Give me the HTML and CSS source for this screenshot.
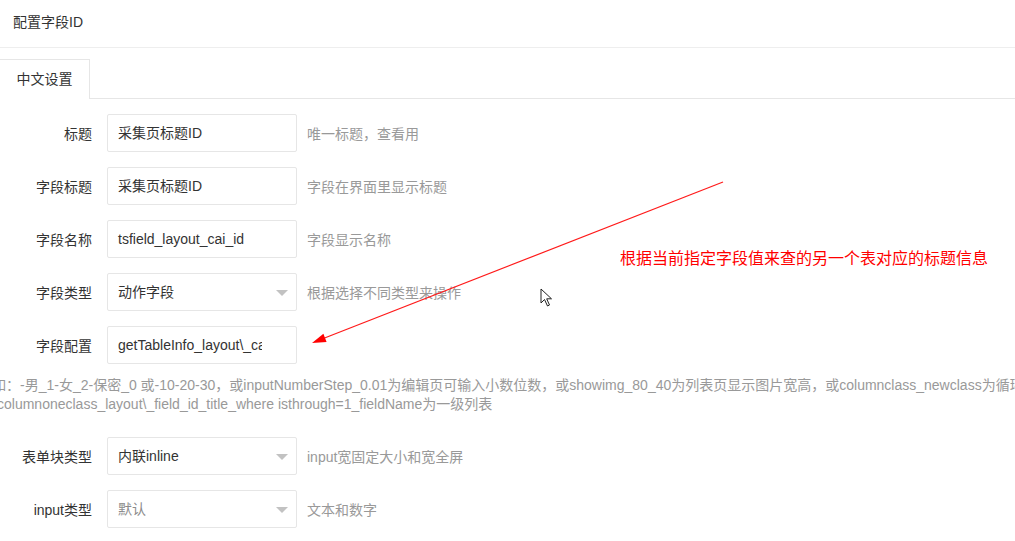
FILE: index.html
```html
<!DOCTYPE html>
<html>
  <head>
    <meta charset="utf-8" />
    <title>配置字段ID</title>
    <link rel="stylesheet" href="styles.css">
  </head>
  <body>
    <div class="page">
      <div class="page-header">配置字段ID</div>

      <div class="tab-bar">
        <div class="tab tab-active">中文设置</div>
      </div>

      <form class="form">
        <div class="form-row">
          <label class="form-label">标题</label>
          <div class="field">采集页标题ID</div>
          <div class="help">唯一标题，查看用</div>
        </div>
        <div class="form-row">
          <label class="form-label">字段标题</label>
          <div class="field">采集页标题ID</div>
          <div class="help">字段在界面里显示标题</div>
        </div>
        <div class="form-row">
          <label class="form-label">字段名称</label>
          <div class="field">tsfield_layout_cai_id</div>
          <div class="help">字段显示名称</div>
        </div>
        <div class="form-row">
          <label class="form-label">字段类型</label>
          <div class="field field-select">动作字段<i class="caret"></i></div>
          <div class="help">根据选择不同类型来操作</div>
        </div>
        <div class="form-row">
          <label class="form-label">字段配置</label>
          <div class="field"><span class="field-clip">getTableInfo_layout\_cai_id</span></div>
        </div>

        <div class="long-help">
          <span>例如：-男_1-女_2-保密_0 或-10-20-30，或inputNumberStep_0.01为编辑页可输入小数位数，或showimg_80_40为列表页显示图片宽高，或columnclass_newclass为循环</span>
          <span>columnoneclass_layout\_field_id_title_where isthrough=1_fieldName为一级列表</span>
        </div>

        <div class="form-row">
          <label class="form-label">表单块类型</label>
          <div class="field field-select">内联inline<i class="caret"></i></div>
          <div class="help">input宽固定大小和宽全屏</div>
        </div>
        <div class="form-row">
          <label class="form-label">input类型</label>
          <div class="field field-select field-muted">默认<i class="caret"></i></div>
          <div class="help">文本和数字</div>
        </div>
      </form>
    </div>

    <!-- annotation drawn over the screenshot -->
    <svg class="note-arrow" width="1015" height="541" viewBox="0 0 1015 541">
      <line x1="723" y1="182" x2="322" y2="339" stroke="#ff1a1a" stroke-width="1.2" />
      <polygon points="312,343 326.6,342.1 323.4,333.7" fill="#ff0000" />
    </svg>
    <div class="note-text">根据当前指定字段值来查的另一个表对应的标题信息</div>

    <svg class="cursor" width="14" height="20" viewBox="0 0 14 20">
      <path d="M1 1 L1 15 L4.5 11.5 L7.5 18 L9.5 17 L6.7 10.8 L11.5 10.8 Z" fill="#fff" stroke="#222" stroke-width="1" stroke-linejoin="round" />
    </svg>
  </body>
</html>
```

FILE: styles.css
```css
html,
body {
  margin: 0;
  padding: 0;
  width: 100%;
  height: 100%;
  overflow: hidden;
  background: #fff;
}

body {
  font-family: "Liberation Sans", "Noto Sans CJK SC", sans-serif;
  font-size: 14px;
  color: #333;
}

/* Header */

.page-header {
  height: 47px;
  line-height: 45px;
  padding-left: 13px;
  border-bottom: 1px solid #eeeeee;
}

/* Tabs */

.tab-bar {
  display: flex;
  margin-top: 11px;
  border-bottom: 1px solid #e6e6e6;
}

.tab {
  width: 90px;
  height: 39px;
  line-height: 39px;
  text-align: center;
  box-sizing: border-box;
}

.tab-active {
  border: 1px solid #e6e6e6;
  border-left: none;
  border-bottom: none;
  margin-bottom: -1px;
  height: 40px;
  background: #fff;
}

/* Form */

.form {
  padding-top: 15px;
}

.form-row {
  display: flex;
  align-items: center;
  height: 38px;
  margin-bottom: 15px;
}

.form-label {
  width: 92px;
  padding-right: 15px;
  text-align: right;
  flex-shrink: 0;
}

.field {
  width: 190px;
  height: 38px;
  box-sizing: border-box;
  border: 1px solid #e6e6e6;
  border-radius: 2px;
  padding: 0 10px;
  line-height: 36px;
  white-space: nowrap;
  flex-shrink: 0;
}

.field-clip {
  display: block;
  width: 144px;
  overflow: hidden;
}

.field-select {
  display: flex;
  justify-content: space-between;
  align-items: center;
  padding-right: 8px;
}

.field-muted {
  color: #8c8c8c;
}

.caret {
  width: 0;
  height: 0;
  border-left: 6px solid transparent;
  border-right: 6px solid transparent;
  border-top: 6px solid #c2c2c2;
  margin-top: 1px;
}

.help {
  margin-left: 10px;
  color: #999;
  white-space: nowrap;
}

.long-help {
  margin: -3px 0 23px -22px;
  color: #999;
  line-height: 19px;
  white-space: nowrap;
}

.long-help span {
  display: block;
}

.long-help span + span {
  margin-left: 19px;
}

/* Annotation */

.note-arrow {
  position: absolute;
  left: 0;
  top: 0;
  pointer-events: none;
}

.note-text {
  position: absolute;
  left: 620px;
  top: 245px;
  font-size: 16px;
  color: #ff0000;
  white-space: nowrap;
}

.cursor {
  position: absolute;
  left: 540px;
  top: 288px;
}
```
